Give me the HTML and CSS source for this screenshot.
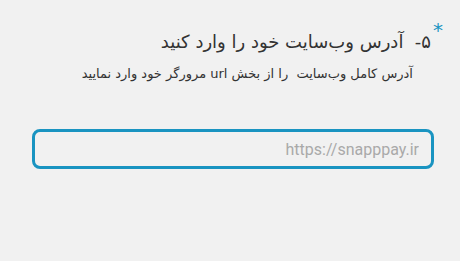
FILE: index.html
```html
<!DOCTYPE html>
<html lang="fa" dir="rtl">
<head>
    <meta charset="UTF-8">
    <meta name="viewport" content="width=device-width, initial-scale=1.0">
    <title>آدرس وب‌سایت</title>
    <link rel="stylesheet" href="styles.css">
</head>
<body>
    <div class="question">
        <div class="question-title">
            <span class="required">*</span>
            <h2>۵-&nbsp; آدرس وب‌سایت خود را وارد کنید</h2>
        </div>
        <p class="question-desc">آدرس کامل وب‌سایت&nbsp; را از بخش url مرورگر خود وارد نمایید</p>
        <div class="answer">
            <input type="text" class="text-input" placeholder="https://snapppay.ir" dir="ltr" autofocus>
        </div>
    </div>
</body>
</html>
```

FILE: styles.css
```css
body {
    margin: 0;
    background: #f1f1f1;
    font-family: 'DejaVu Sans', 'Roboto', sans-serif;
    color: #333;
}

.question {
    padding: 20px 17px 0 27px;
}

.question-title {
    display: flex;
    align-items: flex-start;
}

.required {
    color: #1a94c1;
    font-size: 20px;
    line-height: 1;
    margin-left: 2px;
}

.question-title h2 {
    font-size: 18px;
    font-weight: normal;
    margin: 10px 0 0;
    line-height: 24px;
}

.question-desc {
    font-size: 13px;
    margin: 10px 30px 0 0;
    line-height: 20px;
}

.answer {
    margin-top: 45px;
    padding-left: 5px;
    padding-right: 9px;
}

.text-input {
    box-sizing: border-box;
    width: 100%;
    height: 40px;
    border: 3px solid #1a94c1;
    border-radius: 8px;
    background: #f1f1f1;
    font-family: 'Roboto', sans-serif;
    font-size: 16px;
    color: #333;
    text-align: right;
    padding: 0 12px;
    outline: none;
}

.text-input::placeholder {
    color: #a9a9a9;
}
```
